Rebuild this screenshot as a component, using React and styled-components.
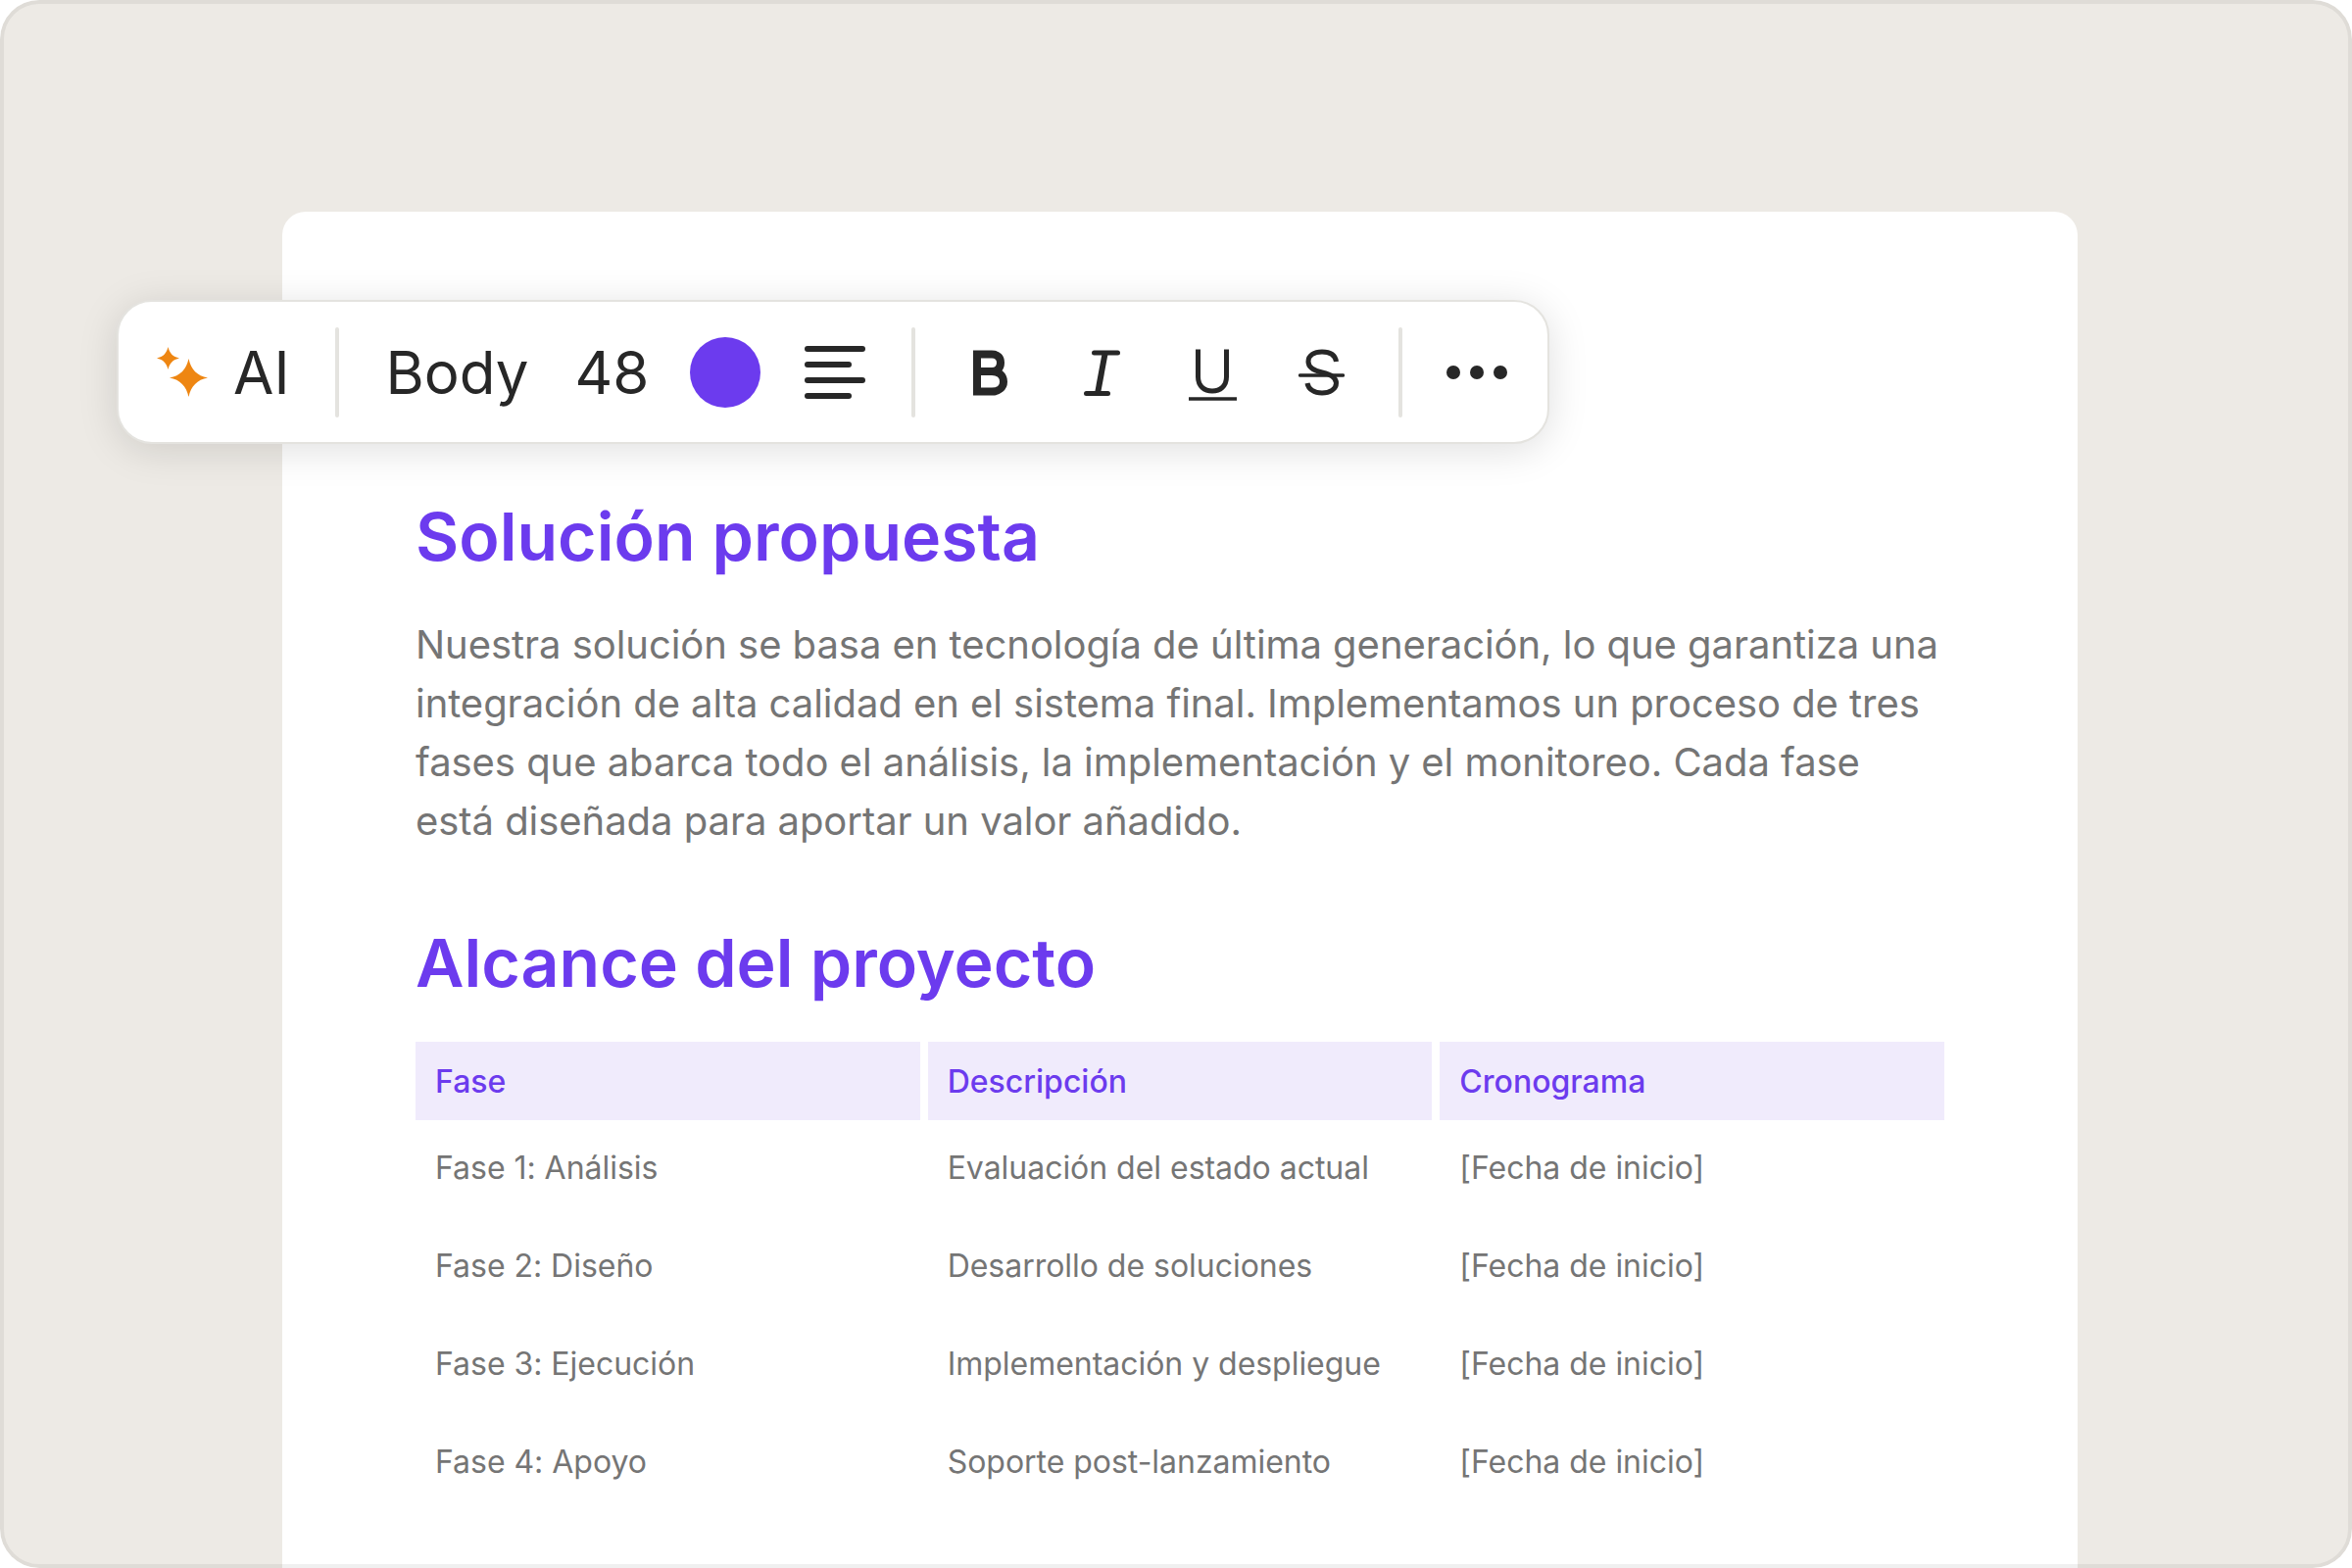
import React from "react";
import styled, { createGlobalStyle } from "styled-components";

const purple = "#6c3bee";
const ink = "#272727";

const GlobalStyle = createGlobalStyle`
  html, body {
    margin: 0;
    padding: 0;
    background: #ffffff;
  }
  body {
    font-family: Inter, "Noto Sans", sans-serif;
  }
`;

const Frame = styled.div`
  position: relative;
  box-sizing: border-box;
  width: 2400px;
  height: 1600px;
  padding: 216px 280px 4px 288px;
  background: #edeae5;
  border-radius: 40px;
  overflow: hidden;

  &::after {
    content: "";
    position: absolute;
    inset: 0;
    border: 4px solid rgba(0, 0, 0, 0.06);
    border-radius: 40px;
    pointer-events: none;
  }
`;

const Page = styled.main`
  box-sizing: border-box;
  width: 1832px;
  height: 1384px;
  padding: 287px 136px 0;
  background: #ffffff;
  border-radius: 24px 24px 0 0;
`;

const Toolbar = styled.div`
  position: absolute;
  top: 306px;
  left: 119px;
  box-sizing: border-box;
  width: 1462px;
  height: 147px;
  display: flex;
  align-items: center;
  background: #ffffff;
  border: 2px solid #e4e3df;
  border-radius: 36px;
  box-shadow: 0 6px 40px rgba(0, 0, 0, 0.13);
  color: ${ink};
  font-size: 60px;
  line-height: 1;
  z-index: 1;
`;

const Group = styled.div`
  display: flex;
  align-items: center;
  padding: ${(p) => p.$padding || "0"};
`;

const Divider = styled.span`
  flex: none;
  width: 4px;
  height: 92px;
  background: #e4e3df;
  border-radius: 2px;
`;

const Swatch = styled.span`
  flex: none;
  width: 72px;
  height: 72px;
  margin-right: 45px;
  border-radius: 50%;
  background: ${purple};
`;

const Label = styled.span`
  display: block;
  margin: 0 ${(p) => p.$right || 0}px 0 ${(p) => p.$left || 0}px;
`;

const Icon = styled.svg`
  flex: none;
  display: block;
  margin-left: ${(p) => p.$left || 0}px;
`;

const SectionTitle = styled.h2`
  margin: ${(p) => p.$top || 0}px 0 0;
  color: ${purple};
  font-size: 68px;
  font-weight: 600;
  line-height: 88px;
`;

const Paragraph = styled.p`
  width: 1560px;
  margin: 37px 0 0;
  color: #757575;
  font-size: 40px;
  line-height: 60px;
  letter-spacing: -0.05px;
`;

const Table = styled.div`
  display: grid;
  grid-template-columns: repeat(3, 1fr);
  grid-template-rows: 80px repeat(4, 100px);
  column-gap: 8px;
  width: 1560px;
  margin-top: 37px;
`;

const HeadCell = styled.div`
  display: flex;
  align-items: center;
  padding-left: 20px;
  background: #f0ebfc;
  color: ${purple};
  font-size: 32px;
  font-weight: 500;
`;

const Cell = styled.div`
  display: flex;
  align-items: center;
  padding: 0 0 4px 20px;
  color: #757575;
  font-size: 32px;
  letter-spacing: -0.03px;
`;

const SparkleIcon = () => (
  <Icon width="52" height="51" viewBox="0 0 52 51" fill="#ee8612">
    <path d="M11.500 0 C13 6.500 16.500 10 23 11.500 C16.500 13 13 16.500 11.500 23 C10 16.500 6.500 13 0 11.500 C6.500 10 10 6.500 11.500 0 Z" />
    <path d="M32.500 12 C35 23 41 29.500 52 31.500 C41 33.500 35 40 32.500 51 C30 40 24 33.500 13 31.500 C24 29.500 30 23 32.500 12 Z" />
  </Icon>
);

const AlignIcon = () => (
  <Icon width="62" height="54" viewBox="0 0 62 54" stroke={ink} strokeWidth="6" strokeLinecap="round">
    <path d="M3 3 H59" />
    <path d="M3 19 H45" />
    <path d="M3 35 H59" />
    <path d="M3 51 H45" />
  </Icon>
);

const BoldIcon = ({ left }) => (
  <Icon $left={left} width="36" height="60" viewBox="0 0 36 60" fill="none" stroke={ink} strokeWidth="8">
    <path d="M4 11.500 H19 C25 11.500 28 15 28 20 C28 25.500 25 29 19 29 C26 29 31 33 31 39.500 C31 45.500 26 49.500 19 49.500 H4 Z" />
    <path d="M4 29 H19" />
  </Icon>
);

const ItalicIcon = ({ left }) => (
  <Icon $left={left} width="37" height="60" viewBox="0 0 37 60" fill="none" stroke={ink} strokeLinecap="round">
    <path d="M10.500 10 H34.500" strokeWidth="5" />
    <path d="M2.500 51.500 H24.500" strokeWidth="5" />
    <path d="M21.700 10 L14 51.500" strokeWidth="6" strokeLinecap="butt" />
  </Icon>
);

const UnderlineIcon = ({ left }) => (
  <Icon $left={left} width="49" height="60" viewBox="0 0 49 60" fill="none" stroke={ink} strokeWidth="5">
    <path d="M9.500 6.500 V34.500 C9.500 44 16 49 24 49 C32 49 38.500 44 38.500 34.500 V6.500" />
    <path d="M0 57 H49" strokeWidth="3.500" />
  </Icon>
);

const StrikeIcon = ({ left }) => (
  <Icon $left={left} width="47" height="60" viewBox="0 0 47 60" fill="none" stroke={ink} strokeWidth="5">
    <path d="M38.500 19 C37.500 12 32 9 24 9 C16 9 10 12.500 10 19 C10 25 15 28 24 30 C33 32 38.500 35 38.500 41 C38.500 47 32 51 24 51 C16 51 10 47 9 41" />
    <path d="M1.500 33 H45.500" strokeLinecap="round" strokeWidth="3.500" />
  </Icon>
);

const MoreIcon = () => (
  <Icon width="62" height="16" viewBox="0 0 62 16" fill={ink}>
    <circle cx="7" cy="8" r="7" />
    <circle cx="31" cy="8" r="7" />
    <circle cx="55" cy="8" r="7" />
  </Icon>
);

const columns = ["Fase", "Descripción", "Cronograma"];

const rows = [
  ["Fase 1: Análisis", "Evaluación del estado actual", "[Fecha de inicio]"],
  ["Fase 2: Diseño", "Desarrollo de soluciones", "[Fecha de inicio]"],
  ["Fase 3: Ejecución", "Implementación y despliegue", "[Fecha de inicio]"],
  ["Fase 4: Apoyo", "Soporte post-lanzamiento", "[Fecha de inicio]"],
];

export default function App() {
  return (
    <>
      <GlobalStyle />
      <Frame>
        <Toolbar>
          <Group $padding="0 46px 0 39px">
            <SparkleIcon />
            <Label $left={26}>AI</Label>
          </Group>
          <Divider />
          <Group $padding="0 47px 0 48px">
            <Label $right={47}>Body</Label>
            <Label $right={42}>48</Label>
            <Swatch />
            <AlignIcon />
          </Group>
          <Divider />
          <Group $padding="0 55px 0 59px">
            <BoldIcon />
            <ItalicIcon left={77} />
            <UnderlineIcon left={70} />
            <StrikeIcon left={63} />
          </Group>
          <Divider />
          <Group $padding="0 0 0 45px">
            <MoreIcon />
          </Group>
        </Toolbar>
        <Page>
          <SectionTitle>Solución propuesta</SectionTitle>
          <Paragraph>
            Nuestra solución se basa en tecnología de última generación, lo que
            garantiza una integración de alta calidad en el sistema final.
            Implementamos un proceso de tres fases que abarca todo el análisis,
            la implementación y el monitoreo. Cada fase está diseñada para
            aportar un valor añadido.
          </Paragraph>
          <SectionTitle $top={70}>Alcance del proyecto</SectionTitle>
          <Table>
            {columns.map((column) => (
              <HeadCell key={column}>{column}</HeadCell>
            ))}
            {rows.map((row) =>
              row.map((text, i) => <Cell key={row[0] + i}>{text}</Cell>)
            )}
          </Table>
        </Page>
      </Frame>
    </>
  );
}
